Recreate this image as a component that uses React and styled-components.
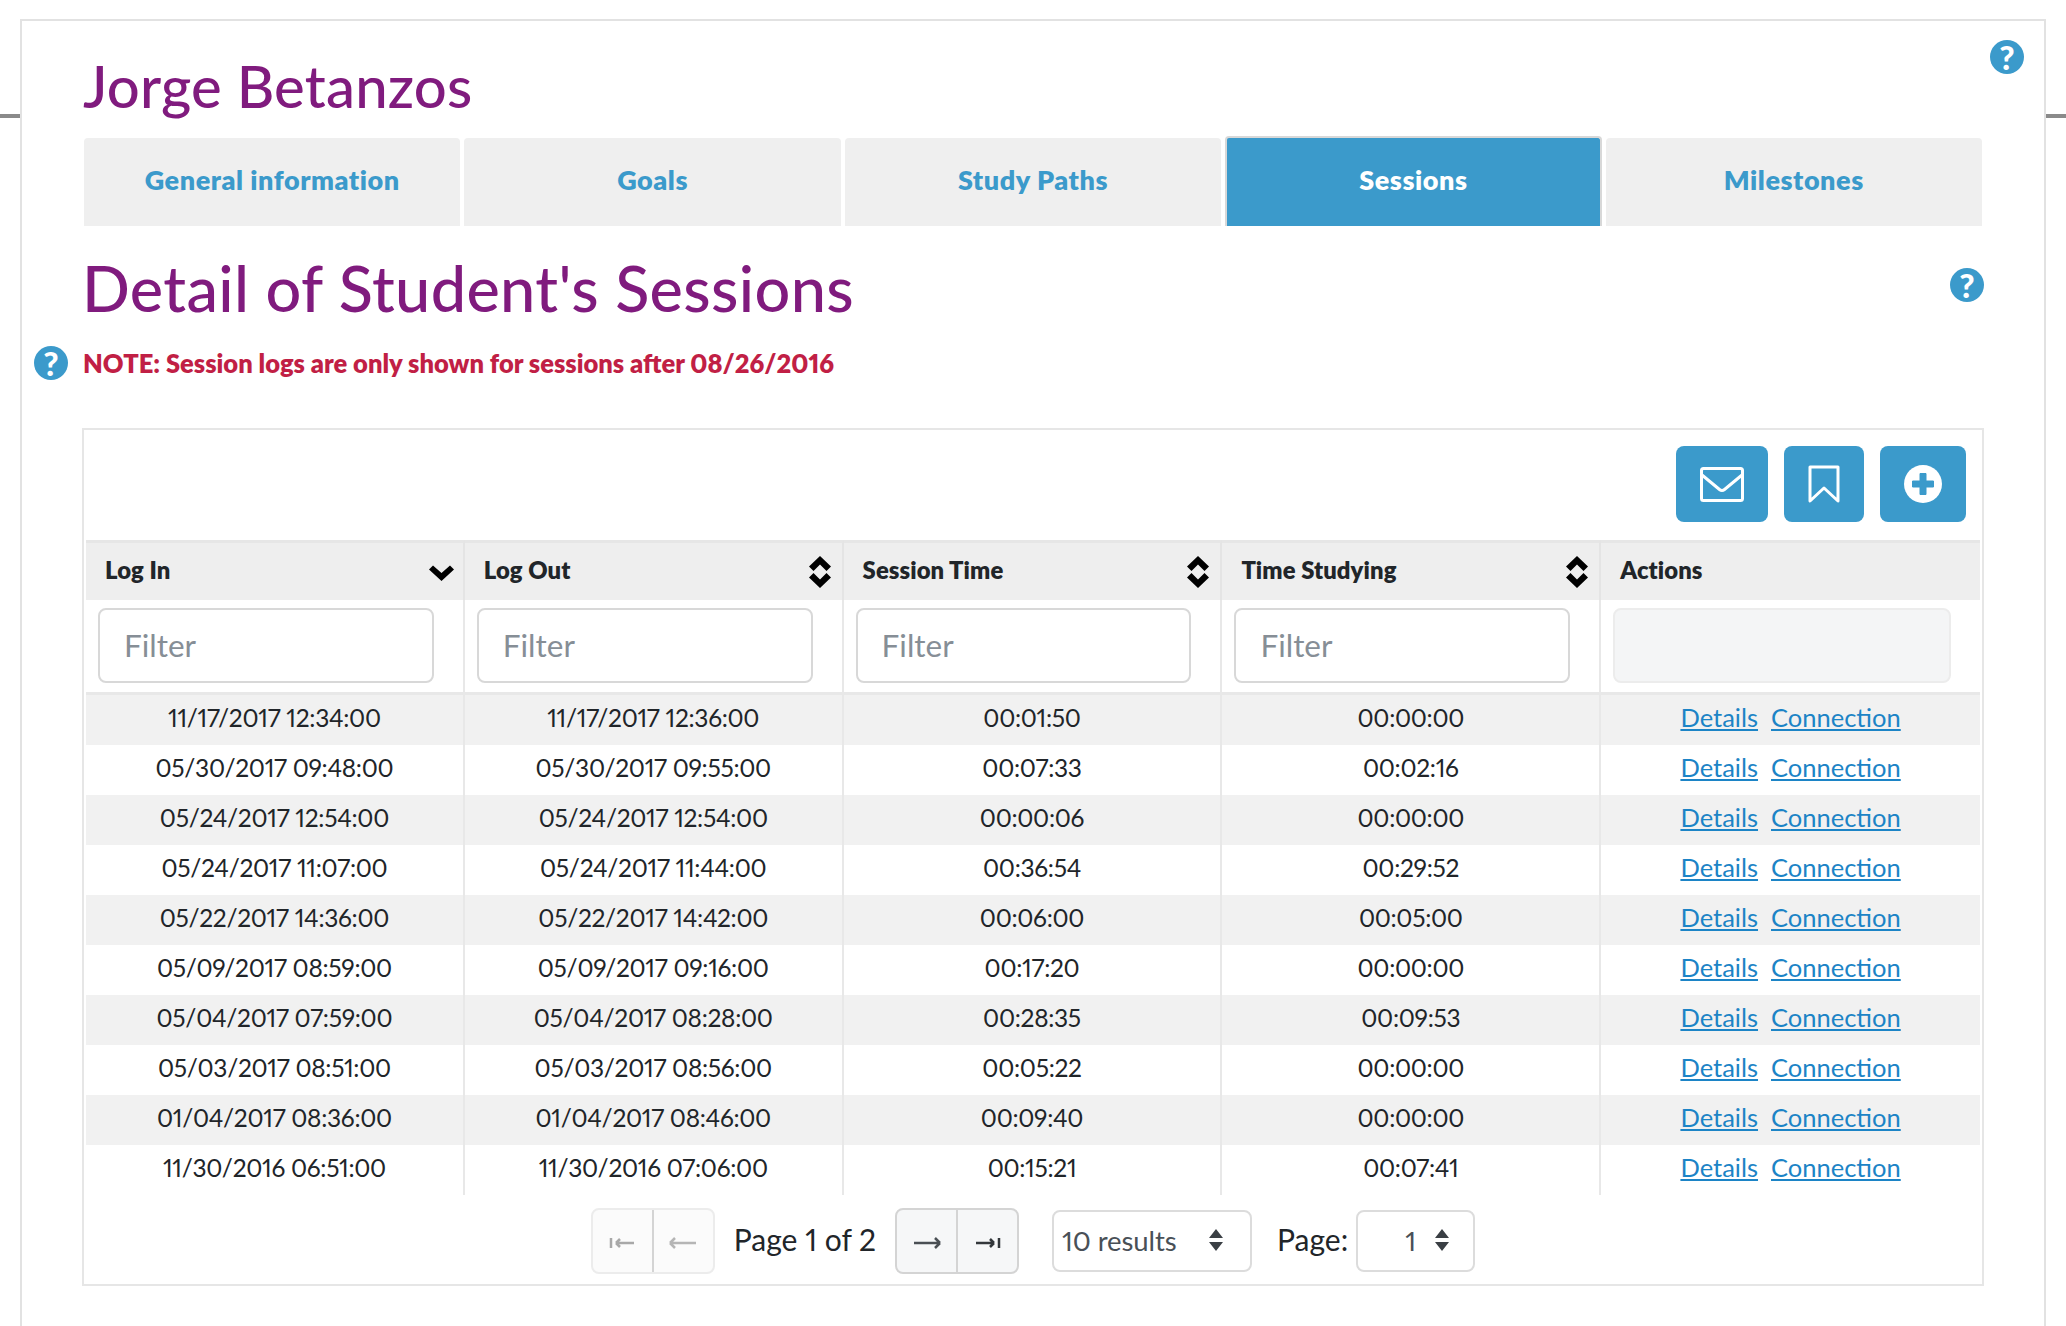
import React from 'react';
import styled, { createGlobalStyle } from 'styled-components';

const Global = createGlobalStyle`
  html, body { margin: 0; padding: 0; background: #fff; }
  body { font-family: Lato, "Liberation Sans", sans-serif; color: #212529; height: 1326px; overflow: hidden; font-variant-numeric: proportional-nums; }
  * { box-sizing: border-box; }
`;

const Page = styled.div`position: relative; height: 1326px; overflow: hidden; padding: 19px 20px 0 20px;`;
const SideDash = styled.div`
  position: absolute; top: 114px; height: 4px; width: 22px; background: #8a8a8a;
  ${p => (p.$right ? 'right: 0;' : 'left: 0;')}
`;
const Panel = styled.div`
  position: relative; height: 1400px; background: #fff;
  border: 2px solid #e2e2e2; border-bottom: 0;
  padding: 30px 62px 0 62px;
`;
const HelpBadge = styled.span`
  position: absolute; width: 34px; height: 34px; border-radius: 50%;
  background: #3b9acb; color: #fff; font-weight: 900; font-size: 33px; line-height: 34px; text-align: center;
  ${p => `top: ${p.$top}px; ${p.$side}: ${p.$offset}px;`}
`;
const Name = styled.h1`
  margin: -2px 0 16px -1px; font-weight: 500; font-size: 58px; line-height: 73px; color: #801b7e; letter-spacing: 0.2px;
`;
const Tabs = styled.div`display: grid; grid-template-columns: repeat(5, 1fr); gap: 4px; height: 88px;`;
const Tab = styled.a`
  display: flex; justify-content: center; padding-top: 25px;
  background: ${p => (p.$active ? '#3b9acb' : '#efefef')};
  color: ${p => (p.$active ? '#fff' : '#3b9acb')};
  font-size: 27px; line-height: 34px; font-weight: 800; letter-spacing: 0.55px;
  border-radius: 4px 4px 0 0;
  ${p => p.$active && 'border: 2px solid #d8d8d8; border-bottom: 0; margin-top: -2px; height: 90px;'}
`;
const SectionTitle = styled.h2`
  margin: 22px 0 18px -2px; font-weight: 500; font-size: 63px; line-height: 80px; color: #801b7e; letter-spacing: 0.35px;
`;
const Note = styled.p`
  margin: 1px 0 48px -1px; font-size: 25.5px; line-height: 34px; font-weight: 800; color: #c11f45; letter-spacing: 0;
`;
const Card = styled.div`
  margin: 0 -2px; border: 2px solid #e6e6e6; padding: 0 2px; height: 858px;
`;
const Toolbar = styled.div`display: flex; justify-content: flex-end; gap: 16px; padding: 16px 14px 18px 0;`;
const IconButton = styled.button`
  display: flex; align-items: center; justify-content: center;
  width: ${p => p.$w}px; height: 76px; background: #3b9acb; border: 0; border-radius: 8px; padding: 0;
`;
const Table = styled.table`width: 100%; table-layout: fixed; border-collapse: separate; border-spacing: 0;`;
const Head = styled.th`
  height: 60px; padding: 0 11px 0 19px; background: #eeeeee; text-align: left;
  border-top: 3px solid #e6e6e6; border-right: 2px solid #e4e4e4;
  font-size: 23.8px; font-weight: 800; color: #212529; letter-spacing: 0.1px;
  &:last-child { border-right: 0; }
`;
const HeadInner = styled.div`display: flex; align-items: center; justify-content: space-between;`;
const HeadLabel = styled.span`margin-bottom: 3px;`;
const FilterCell = styled.td`
  height: 94px; padding: 8px 29px 9px 12px; border-right: 2px solid #e8e8e8; border-bottom: 3px solid #e8e8e8;
  &:last-child { border-right: 0; }
`;
const FilterInput = styled.input`
  display: block; width: 100%; height: 75px; padding: 0 24px 2px; border-radius: 8px;
  border: 2px solid ${p => (p.disabled ? '#ececec' : '#d8d8d8')};
  background: ${p => (p.disabled ? '#f4f5f6' : '#fff')};
  font: 400 31.5px Lato, sans-serif; color: #212529;
  &::placeholder { color: #868e96; opacity: 1; }
`;
const Row = styled.tr`background: ${p => (p.$odd ? '#f1f1f1' : '#fff')};`;
const Cell = styled.td`
  height: 50px; padding: 0 0 5px; text-align: center; font-size: 24.5px; line-height: 30px; color: #212529;
  border-right: 2px solid #e8e8e8; letter-spacing: -0.3px;
  &:last-child { border-right: 0; }
`;
const LinkText = styled.a`
  color: #1c84c6; text-decoration: underline; font-size: 25.5px; line-height: 26px; letter-spacing: 0;
  & + & { margin-left: 13px; }
`;
const Pagination = styled.div`display: flex; align-items: center; justify-content: center; padding-top: 13px;`;
const NavGroup = styled.div`
  display: flex; height: 66px; width: 124px; border-radius: 8px;
  border: 2px solid ${p => (p.$off ? '#ececec' : '#d4d4d4')};
  background: ${p => (p.$off ? '#fbfbfb' : '#f6f7f8')};
`;
const NavButton = styled.span`
  flex: 1; display: flex; align-items: center; justify-content: center; padding-top: 4px;
  & + & { border-left: 2px solid ${p => (p.$off ? '#ececec' : '#d4d4d4')}; }
`;
const PageText = styled.span`font-size: 30px; line-height: 40px; padding-bottom: 4px; margin: 0 ${p => p.$mr}px 0 ${p => p.$ml}px; color: #212529; letter-spacing: 0;`;
const Picker = styled.div`
  display: flex; align-items: center; justify-content: space-between;
  width: ${p => p.$w}px; height: 62px; border: 2px solid #dcdcdc; border-radius: 8px; margin-left: ${p => p.$ml || 0}px;
  padding: 0 ${p => p.$pr}px 2px ${p => p.$pl}px; font-size: 27.5px; color: #495057; letter-spacing: -0.1px;
`;
const DownIcon = styled.svg`margin-right: -2px;`;

const SortDown = () => (
  <DownIcon width="25" height="18" viewBox="0 0 25 18"><path d="M0 6.5 L4 2.5 L12.5 10 L21 2.5 L25 6.5 L12.5 18Z" fill="#000" /></DownIcon>
);
const SortBoth = () => (
  <svg width="22" height="32" viewBox="0 0 22 32">
    <path d="M11 0 L22 10.5 L17.500 15 L11 8.500 L4.500 15 L0 10.5Z" fill="#000" />
    <path d="M11 32 L22 21.500 L17.500 17 L11 23.500 L4.500 17 L0 21.500Z" fill="#000" />
  </svg>
);
const Mail = () => (
  <svg width="44" height="35" viewBox="0 0 44 35" fill="none" stroke="#fff" strokeWidth="3" strokeLinejoin="round" strokeLinecap="round">
    <rect x="1.500" y="1.500" width="41" height="32" rx="2" />
    <path d="M2 8 L19.500 22.500 Q22 24.500 24.500 22.500 L42 8" />
  </svg>
);
const Bookmark = () => (
  <svg width="32" height="38" viewBox="0 0 32 38" fill="none" stroke="#fff" strokeWidth="3" strokeLinejoin="round">
    <path d="M2 2 H30 V36 L16 23 L2 36Z" />
  </svg>
);
const PlusCircle = () => (
  <svg width="38" height="38" viewBox="0 0 38 38">
    <circle cx="19" cy="19" r="19" fill="#fff" />
    <path d="M16 8.500 H22 V16 H29.500 V22 H22 V29.500 H16 V22 H8.500 V16 H16Z" fill="#3b9acb" stroke="#3b9acb" strokeLinejoin="round" />
  </svg>
);
const Nav = ({ type, color }) => {
  const d = {
    first: 'M3 5 V15 M8 10 L12 6 M8 10 L12 14 M8 10 H26',
    prev: 'M1 10 L6 5 M1 10 L6 15 M1 10 H27',
    next: 'M27 10 L22 5 M27 10 L22 15 M1 10 H27',
    last: 'M25 5 V15 M20 10 L16 6 M20 10 L16 14 M20 10 H2',
  }[type];
  return <svg width="28" height="20" viewBox="0 0 28 20" fill="none" stroke={color} strokeWidth="2.500"><path d={d} /></svg>;
};
const Updown = () => (
  <svg width="16" height="24" viewBox="0 0 16 24"><path d="M8 1 L15 10 H1Z M8 23 L15 14 H1Z" fill="#3a3f44" /></svg>
);

const rows = [
  ['11/17/2017 12:34:00', '11/17/2017 12:36:00', '00:01:50', '00:00:00'],
  ['05/30/2017 09:48:00', '05/30/2017 09:55:00', '00:07:33', '00:02:16'],
  ['05/24/2017 12:54:00', '05/24/2017 12:54:00', '00:00:06', '00:00:00'],
  ['05/24/2017 11:07:00', '05/24/2017 11:44:00', '00:36:54', '00:29:52'],
  ['05/22/2017 14:36:00', '05/22/2017 14:42:00', '00:06:00', '00:05:00'],
  ['05/09/2017 08:59:00', '05/09/2017 09:16:00', '00:17:20', '00:00:00'],
  ['05/04/2017 07:59:00', '05/04/2017 08:28:00', '00:28:35', '00:09:53'],
  ['05/03/2017 08:51:00', '05/03/2017 08:56:00', '00:05:22', '00:00:00'],
  ['01/04/2017 08:36:00', '01/04/2017 08:46:00', '00:09:40', '00:00:00'],
  ['11/30/2016 06:51:00', '11/30/2016 07:06:00', '00:15:21', '00:07:41'],
];
const tabs = ['General information', 'Goals', 'Study Paths', 'Sessions', 'Milestones'];
const heads = [['Log In', <SortDown />], ['Log Out', <SortBoth />], ['Session Time', <SortBoth />], ['Time Studying', <SortBoth />], ['Actions', null]];

export default function App() {
  return (
    <Page>
      <Global />
      <SideDash />
      <SideDash $right />
      <Panel>
        <HelpBadge $top={19} $side="right" $offset={20}>?</HelpBadge>
        <HelpBadge $top={247} $side="right" $offset={60}>?</HelpBadge>
        <HelpBadge $top={325} $side="left" $offset={12}>?</HelpBadge>
        <Name>Jorge Betanzos</Name>
        <Tabs>
          {tabs.map(t => <Tab key={t} $active={t === 'Sessions'}>{t}</Tab>)}
        </Tabs>
        <SectionTitle>Detail of Student's Sessions</SectionTitle>
        <Note>NOTE: Session logs are only shown for sessions after 08/26/2016</Note>
        <Card>
          <Toolbar>
            <IconButton $w={92}><Mail /></IconButton>
            <IconButton $w={80}><Bookmark /></IconButton>
            <IconButton $w={86}><PlusCircle /></IconButton>
          </Toolbar>
          <Table>
            <thead>
              <tr>
                {heads.map(([label, icon]) => (
                  <Head key={label}><HeadInner><HeadLabel>{label}</HeadLabel>{icon}</HeadInner></Head>
                ))}
              </tr>
              <tr>
                {heads.map(([label], i) => (
                  <FilterCell key={label}>
                    <FilterInput placeholder={i < 4 ? 'Filter' : ''} disabled={i === 4} />
                  </FilterCell>
                ))}
              </tr>
            </thead>
            <tbody>
              {rows.map((r, i) => (
                <Row key={r[0] + i} $odd={i % 2 === 0}>
                  {r.map((c, j) => <Cell key={j}>{c}</Cell>)}
                  <Cell><LinkText>Details</LinkText><LinkText>Connection</LinkText></Cell>
                </Row>
              ))}
            </tbody>
          </Table>
          <Pagination>
            <NavGroup $off>
              <NavButton $off><Nav type="first" color="#a8a8a8" /></NavButton>
              <NavButton $off><Nav type="prev" color="#b5b5b5" /></NavButton>
            </NavGroup>
            <PageText $ml={19} $mr={19}>Page 1 of 2</PageText>
            <NavGroup>
              <NavButton><Nav type="next" color="#4a4f54" /></NavButton>
              <NavButton><Nav type="last" color="#33373b" /></NavButton>
            </NavGroup>
            <Picker $w={200} $pl={8} $pr={26} $ml={33}>10 results<Updown /></Picker>
            <PageText $ml={25} $mr={8}>Page:</PageText>
            <Picker $w={119} $pl={47} $pr={23}>1<Updown /></Picker>
          </Pagination>
        </Card>
      </Panel>
    </Page>
  );
}
